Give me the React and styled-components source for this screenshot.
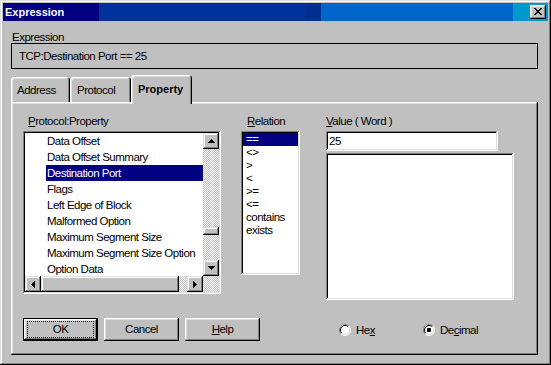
import React from "react";
import styled, { createGlobalStyle, css } from "styled-components";

const GlobalStyle = createGlobalStyle`
  html, body {
    margin: 0;
    padding: 0;
    background: #c0c0c0;
  }
  body {
    font-family: "Liberation Sans", Arial, sans-serif;
    font-size: 11.5px;
    letter-spacing: -0.5px;
    color: #000;
  }
  * {
    box-sizing: border-box;
  }
`;

const raised = css`
  box-shadow: inset -1px -1px #000, inset 1px 1px #fff, inset -2px -2px #808080,
    inset 2px 2px #dfdfdf;
`;

const barRaised = css`
  box-shadow: inset -1px -1px #000, inset 1px 1px #dfdfdf, inset -2px -2px #808080,
    inset 2px 2px #fff;
`;

const sunken = css`
  box-shadow: inset -1px -1px #fff, inset 1px 1px #808080, inset -2px -2px #dfdfdf,
    inset 2px 2px #000;
`;

const checker = css`
  background: repeating-conic-gradient(#c0c0c0 0% 25%, #fff 0% 50%) 0 0 / 2px 2px;
`;

const Window = styled.div`
  width: 551px;
  height: 365px;
  padding: 3px;
  background: #c0c0c0;
  box-shadow: inset -1px -1px #000, inset 1px 1px #dfdfdf, inset -2px -2px #808080,
    inset 2px 2px #fff;
  display: flex;
  flex-direction: column;
`;

const TitleBar = styled.div`
  height: 18px;
  display: flex;
  align-items: center;
  justify-content: space-between;
  padding: 0 2px 0 2px;
  background: linear-gradient(
    to right,
    #000080 0 96px,
    #003399 96px 302px,
    #00308f 302px 318px,
    #0066cc 318px 510px,
    #0099cc 510px
  );
`;

const Title = styled.span`
  color: #fff;
  font-size: 11px;
  font-weight: bold;
  letter-spacing: 0;
  line-height: 18px;
`;

const CloseButton = styled.div`
  width: 16px;
  height: 14px;
  background: #c0c0c0;
  ${raised};
  display: flex;
  align-items: center;
  justify-content: center;
  padding-bottom: 1px;
`;

const Body = styled.div`
  padding: 10px 10px 0 8px;
`;

const FieldLabel = styled.div`
  line-height: ${(p) => p.$lh || 13}px;
  padding-left: ${(p) => p.$indent || 0}px;
  margin-bottom: ${(p) => p.$gap || 0}px;
  white-space: nowrap;
`;

const ExpressionBox = styled.div`
  height: 26px;
  border: 1px solid #000;
  padding-left: 7px;
  line-height: 24px;
`;

const TabStrip = styled.div`
  display: flex;
  align-items: flex-end;
  margin-top: 6px;
  height: 27px;
`;

const Tab = styled.div`
  position: relative;
  width: ${(p) => p.$w}px;
  height: ${(p) => (p.$active ? 29 : 25)}px;
  margin-bottom: ${(p) => (p.$active ? -2 : 0)}px;
  padding: ${(p) => (p.$active ? 8 : 7)}px 0 0 ${(p) => p.$pad}px;
  line-height: 13px;
  font-size: ${(p) => (p.$active ? 11 : 11.5)}px;
  font-weight: ${(p) => (p.$active ? "bold" : "normal")};
  letter-spacing: ${(p) => (p.$active ? 0 : -0.5)}px;
  background: #c0c0c0;
  border-radius: 3px 3px 0 0;
  z-index: ${(p) => (p.$active ? 2 : 1)};
  box-shadow: inset 1px 1px #fff, inset -1px 0 #000, inset -2px 0 #808080,
    inset 2px 2px #dfdfdf;
`;

const Panel = styled.div`
  height: 253px;
  padding: 13px 0 0 12px;
  ${raised};
  display: flex;
  flex-direction: column;
`;

const TopRow = styled.div`
  display: flex;
  align-items: flex-start;
`;

const Column = styled.div`
  display: flex;
  flex-direction: column;
  margin-left: ${(p) => p.$ml || 0}px;
`;

const Underline = styled.span`
  text-decoration: underline;
  text-underline-offset: 1px;
`;

const ListBox = styled.div`
  width: 198px;
  height: 163px;
  padding: 2px;
  background: #fff;
  ${sunken};
  display: grid;
  grid-template-columns: 178px 16px;
  grid-template-rows: 143px 16px;
`;

const ListArea = styled.div`
  grid-column: 1;
  grid-row: 1;
  overflow: hidden;
`;

const PropItem = styled.div`
  height: 16px;
  line-height: 16px;
  margin-left: 21px;
  padding-left: 1px;
  white-space: nowrap;
  background: ${(p) => (p.$selected ? "#000080" : "transparent")};
  color: ${(p) => (p.$selected ? "#fff" : "#000")};
`;

const VBar = styled.div`
  grid-column: 2;
  grid-row: 1 / span 2;
  display: flex;
  flex-direction: column;
  ${checker};
`;

const HBar = styled.div`
  grid-column: 1;
  grid-row: 2;
  display: flex;
  ${checker};
`;

const BarButton = styled.div`
  width: 16px;
  height: 16px;
  flex: none;
  background: #c0c0c0;
  ${barRaised};
  display: flex;
  align-items: center;
  justify-content: center;
`;

const Thumb = styled.div`
  flex: none;
  width: ${(p) => p.$w}px;
  height: ${(p) => p.$h}px;
  background: #c0c0c0;
  ${barRaised};
`;

const Spacer = styled.div`
  flex: ${(p) => (p.$size ? "none" : 1)};
  width: ${(p) => (p.$horiz ? p.$size : 16)}px;
  height: ${(p) => (p.$horiz ? 16 : p.$size)}px;
`;

const RelationList = styled.div`
  width: 59px;
  height: 144px;
  padding: 2px;
  background: #fff;
  ${sunken};
`;

const RelationItem = styled.div`
  height: 13px;
  line-height: 13px;
  padding-left: 3px;
  background: ${(p) => (p.$selected ? "#000080" : "transparent")};
  color: ${(p) => (p.$selected ? "#fff" : "#000")};
`;

const ValueInput = styled.div`
  width: 172px;
  height: 20px;
  padding: 2px 3px;
  line-height: 16px;
  background: #fff;
  ${sunken};
`;

const ValueArea = styled.div`
  width: 188px;
  height: 147px;
  margin-top: 2px;
  background: #fff;
  ${sunken};
`;

const BottomRow = styled.div`
  display: flex;
  align-items: center;
  margin-top: 18px;
`;

const PushButton = styled.div`
  width: 75px;
  height: 23px;
  margin-right: 6px;
  padding: 3px 4px;
  display: flex;
  background: #c0c0c0;
  ${(p) =>
    p.$default
      ? css`
          box-shadow: inset 0 0 0 1px #000, inset -2px -2px #000, inset 2px 2px #fff,
            inset -3px -3px #808080, inset 3px 3px #dfdfdf;
        `
      : raised};
`;

const ButtonFace = styled.span`
  flex: 1;
  display: flex;
  align-items: center;
  justify-content: center;
  border: 1px dotted ${(p) => (p.$focus ? "#000" : "transparent")};
  line-height: 13px;
`;

const RadioGroup = styled.div`
  display: flex;
  margin-left: 73px;
`;

const RadioItem = styled.div`
  display: flex;
  align-items: center;
  width: ${(p) => p.$w || "auto"};
  gap: 5px;
`;

const Arrow = ({ dir }) => {
  const vertical = dir === "up" || dir === "down";
  const rects = [0, 1, 2, 3].map((i) => {
    const len = 1 + 2 * i;
    if (dir === "up") return { x: 3 - i, y: i, w: len, h: 1 };
    if (dir === "down") return { x: 3 - i, y: 3 - i, w: len, h: 1 };
    if (dir === "left") return { x: i, y: 3 - i, w: 1, h: len };
    return { x: 3 - i, y: 3 - i, w: 1, h: len };
  });
  return (
    <svg
      width={vertical ? 7 : 4}
      height={vertical ? 4 : 7}
      shapeRendering="crispEdges"
    >
      {rects.map((r, i) => (
        <rect key={i} x={r.x} y={r.y} width={r.w} height={r.h} fill="#000" />
      ))}
    </svg>
  );
};

const CloseGlyph = () => {
  const rows = ["XX    XX", " XX  XX ", "  XXXX  ", "   XX   ", "  XXXX  ", " XX  XX ", "XX    XX"];
  return (
    <svg width="8" height="7" shapeRendering="crispEdges">
      {rows.map((row, y) =>
        row.split("").map((c, x) =>
          c === "X" ? <rect key={`${x}-${y}`} x={x} y={y} width="1" height="1" fill="#000" /> : null
        )
      )}
    </svg>
  );
};

const Radio = ({ checked }) => (
  <svg width="12" height="12">
    <circle cx="6" cy="6" r="5" fill="#fff" />
    <path d="M2.11 9.89 A5.5 5.5 0 0 1 9.89 2.11" stroke="#808080" fill="none" />
    <path d="M9.89 2.11 A5.5 5.5 0 0 1 2.11 9.89" stroke="#fff" fill="none" />
    <path d="M2.82 9.18 A4.5 4.5 0 0 1 9.18 2.82" stroke="#000" fill="none" />
    <path d="M9.18 2.82 A4.5 4.5 0 0 1 2.82 9.18" stroke="#dfdfdf" fill="none" />
    {checked && <rect x="4" y="4" width="4" height="4" rx="1" fill="#000" />}
  </svg>
);

const properties = [
  "Data Offset",
  "Data Offset Summary",
  "Destination Port",
  "Flags",
  "Left Edge of Block",
  "Malformed Option",
  "Maximum Segment Size",
  "Maximum Segment Size Option",
  "Option Data",
];

const relations = ["==", "<>", ">", "<", ">=", "<=", "contains", "exists"];

export default function App() {
  return (
    <>
      <GlobalStyle />
      <Window>
        <TitleBar>
          <Title>Expression</Title>
          <CloseButton>
            <CloseGlyph />
          </CloseButton>
        </TitleBar>
        <Body>
          <FieldLabel $lh={12} $indent={1}>
            Expression
          </FieldLabel>
          <ExpressionBox>TCP:Destination Port == 25</ExpressionBox>
          <TabStrip>
            <Tab $w={59} $pad={6}>
              Address
            </Tab>
            <Tab $w={61} $pad={7}>
              Protocol
            </Tab>
            <Tab $w={61} $pad={7} $active>
              Property
            </Tab>
          </TabStrip>
          <Panel>
            <TopRow>
              <Column>
                <FieldLabel $indent={5} $gap={3}>
                  <Underline>P</Underline>rotocol:Property
                </FieldLabel>
                <ListBox>
                  <ListArea>
                    {properties.map((name) => (
                      <PropItem key={name} $selected={name === "Destination Port"}>
                        {name}
                      </PropItem>
                    ))}
                  </ListArea>
                  <VBar>
                    <BarButton>
                      <Arrow dir="up" />
                    </BarButton>
                    <Spacer $size={78} />
                    <Thumb $w={16} $h={8} />
                    <Spacer />
                    <BarButton>
                      <Arrow dir="down" />
                    </BarButton>
                    <Spacer $size={16} />
                  </VBar>
                  <HBar>
                    <BarButton>
                      <Arrow dir="left" />
                    </BarButton>
                    <Thumb $w={138} $h={16} />
                    <Spacer $horiz />
                    <BarButton>
                      <Arrow dir="right" />
                    </BarButton>
                  </HBar>
                </ListBox>
              </Column>
              <Column $ml={20}>
                <FieldLabel $indent={6} $gap={3}>
                  <Underline>R</Underline>elation
                </FieldLabel>
                <RelationList>
                  {relations.map((r, i) => (
                    <RelationItem key={r} $selected={i === 0}>
                      {r}
                    </RelationItem>
                  ))}
                </RelationList>
              </Column>
              <Column $ml={26}>
                <FieldLabel $gap={3}>
                  <Underline>V</Underline>alue ( Word )
                </FieldLabel>
                <ValueInput>25</ValueInput>
                <ValueArea />
              </Column>
            </TopRow>
            <BottomRow>
              <PushButton $default>
                <ButtonFace $focus>OK</ButtonFace>
              </PushButton>
              <PushButton>
                <ButtonFace>Cancel</ButtonFace>
              </PushButton>
              <PushButton>
                <ButtonFace>
                  <span>
                    <Underline>H</Underline>elp
                  </span>
                </ButtonFace>
              </PushButton>
              <RadioGroup>
                <RadioItem $w="84px">
                  <Radio />
                  <span>
                    He<Underline>x</Underline>
                  </span>
                </RadioItem>
                <RadioItem>
                  <Radio checked />
                  <span>
                    De<Underline>c</Underline>imal
                  </span>
                </RadioItem>
              </RadioGroup>
            </BottomRow>
          </Panel>
        </Body>
      </Window>
    </>
  );
}
